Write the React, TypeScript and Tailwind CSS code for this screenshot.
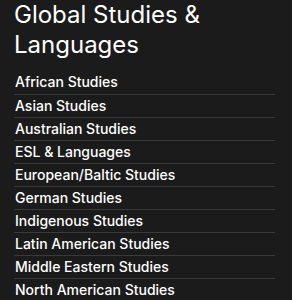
const links = [
  'African Studies',
  'Asian Studies',
  'Australian Studies',
  'ESL & Languages',
  'European/Baltic Studies',
  'German Studies',
  'Indigenous Studies',
  'Latin American Studies',
  'Middle Eastern Studies',
  'North American Studies',
];

export default function App() {
  return (
    <div className="min-h-[300px] bg-[#1b1b1b] pl-[14px] pr-[17px] font-['Inter',sans-serif] text-white">
      <h2 className="text-[24px] leading-[30px] font-normal">Global Studies &amp; Languages</h2>
      <ul className="mt-[11px]">
        {links.map((label, i) => (
          <li
            key={label}
            className={`${i === 0 ? '' : 'border-t border-[#3a3a3a]'} h-[23px] pl-[1px] text-[14px] leading-[22px] font-medium`}
          >
            <a href="#">{label}</a>
          </li>
        ))}
      </ul>
    </div>
  );
}
